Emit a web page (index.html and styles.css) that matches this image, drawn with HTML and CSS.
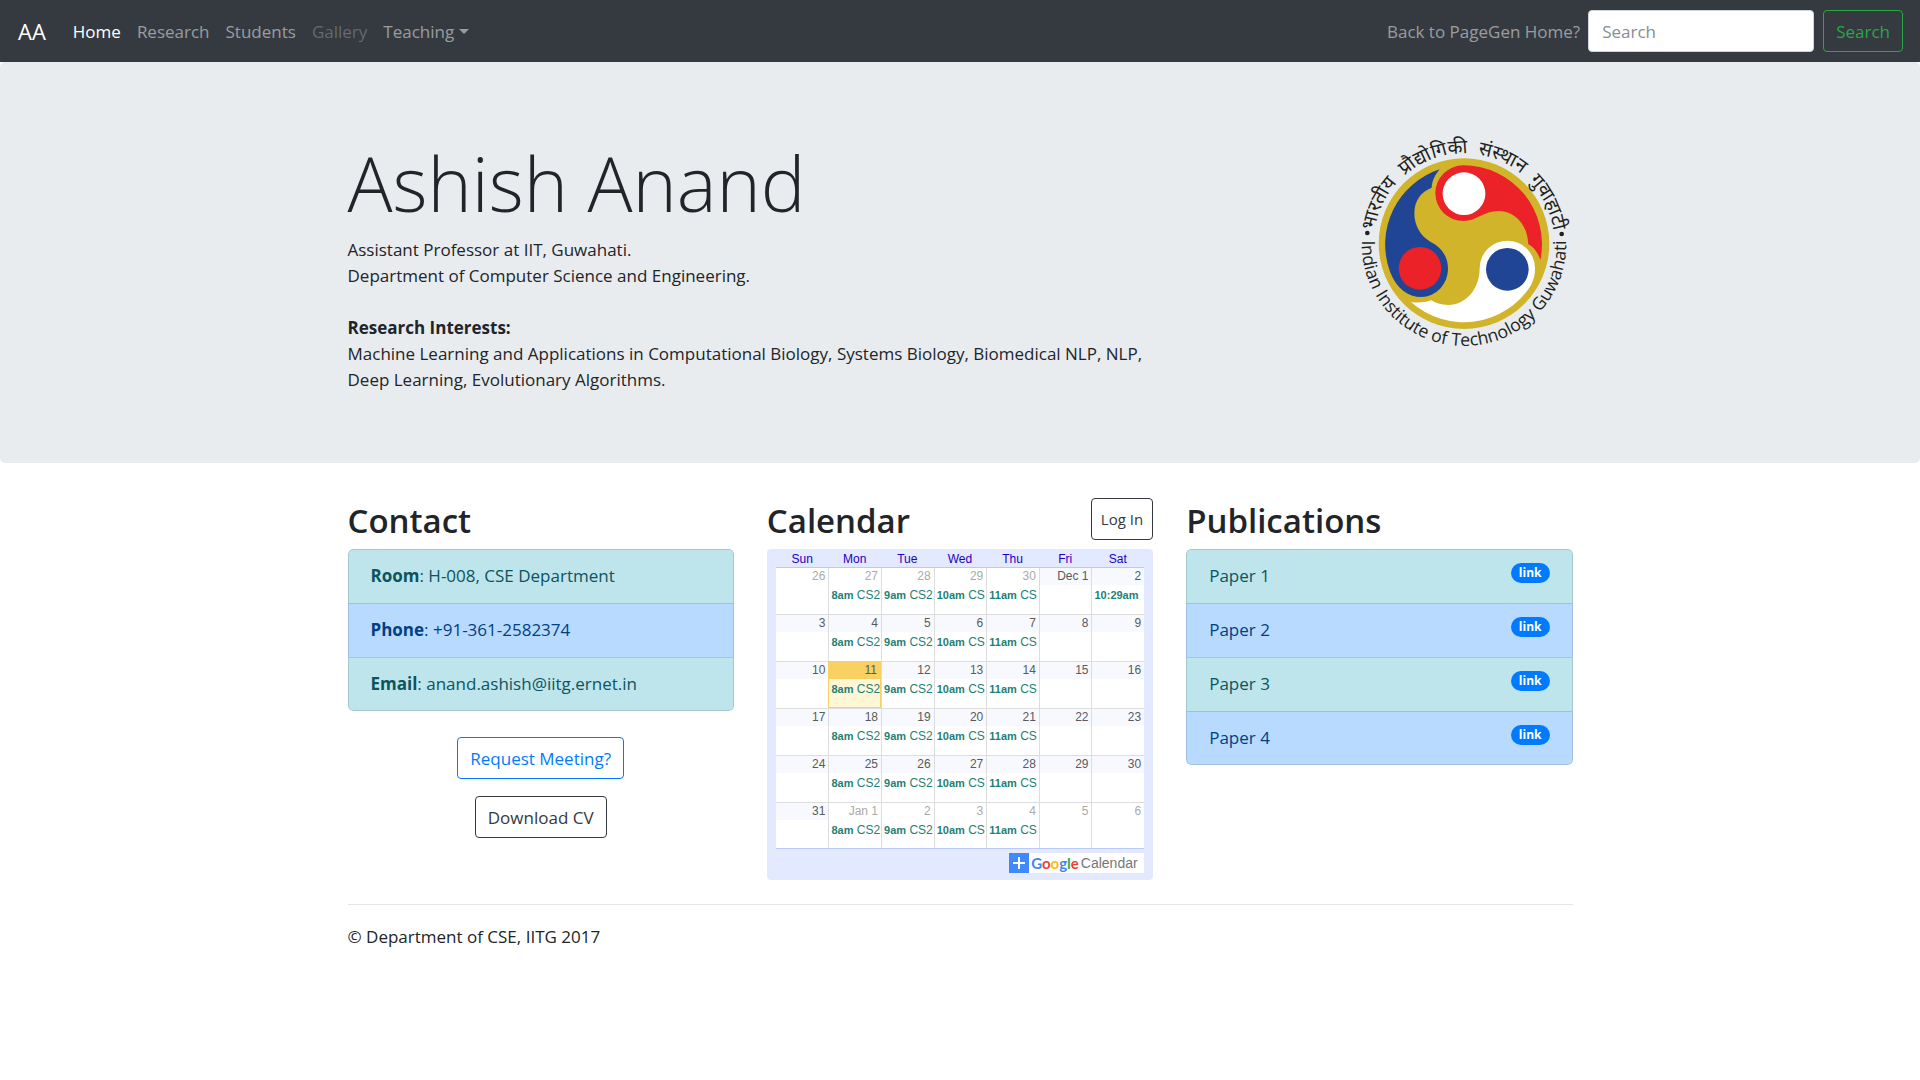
FILE: index.html
```html
<!DOCTYPE html>
<html lang="en">
<head>
<meta charset="utf-8">
<meta name="viewport" content="width=device-width, initial-scale=1">
<title>Ashish Anand</title>
<link rel="stylesheet" href="styles.css">
</head>
<body>
<header class="navbar">
  <a class="brand" href="#">AA</a>
  <nav class="nav-links">
    <a class="nav-link active" href="#">Home</a>
    <a class="nav-link" href="#">Research</a>
    <a class="nav-link" href="#">Students</a>
    <a class="nav-link disabled" href="#">Gallery</a>
    <a class="nav-link dropdown" href="#">Teaching</a>
  </nav>
  <form class="search">
    <a class="nav-link" href="#">Back to PageGen Home?</a>
    <input class="search-input" type="search" placeholder="Search" aria-label="Search">
    <button class="btn btn-success" type="submit">Search</button>
  </form>
</header>

<section class="hero">
  <div class="container hero-row">
    <div class="intro">
      <h1>Ashish Anand</h1>
      <p>Assistant Professor at IIT, Guwahati.<br>Department of Computer Science and Engineering.<br><br><b>Research Interests:</b><br>Machine Learning and Applications in Computational Biology, Systems Biology, Biomedical NLP, NLP, Deep Learning, Evolutionary Algorithms.</p>
    </div>
    <svg class="logo" viewBox="60 36 639 648" role="img" aria-label="Indian Institute of Technology Guwahati">
      <defs>
        <path id="arc-bottom" d="M65 341V371A307 307 0 0 0 679 371V341"/>
        <path id="arc-top" d="M101 391V371A271 271 0 0 1 643 371V391"/>
      </defs>
      <circle cx="372" cy="371" r="256" fill="#d2b42a"/>
      <path fill="#204595" d="M299 148A237 237 0 0 0 150 455C170 506 204 531 244 531A82 84 0 0 0 324 446C324 405 300 380 272 366C240 347 223 315 223 280C223 240 245 215 275 203C276 183 285 165 299 148Z"/>
      <path fill="#eb2227" d="M370 136A236 236 0 0 1 601 420C594 398 582 382 565 373C562 308 520 273 475 273C430 273 410 303 370 303A84 84 0 0 1 286 220A84 84 0 0 1 370 136Z"/>
      <path fill="#fff" d="M213 546A238 238 0 0 0 573 496C582 478 585 462 585 445A83 83 0 0 0 502 362A83 83 0 0 0 419 445C419 510 375 555 325 555C302 555 286 548 273 541C253 548 233 549 213 546Z"/>
      <circle cx="372" cy="221" r="64" fill="#fff"/>
      <circle cx="240" cy="445" r="64" fill="#eb2227"/>
      <circle cx="502" cy="448" r="64" fill="#204595"/>
      <circle cx="82" cy="339" r="7" fill="#231f20"/>
      <circle cx="665" cy="342" r="7" fill="#231f20"/>
      <text class="logo-text"><textPath href="#arc-bottom" startOffset="50%">Indian Institute of Technology Guwahati</textPath></text>
      <text class="logo-text logo-hindi" lang="hi"><textPath href="#arc-top" startOffset="50%">भारतीय&nbsp; प्रौद्योगिकी&nbsp; संस्थान&nbsp; गुवाहाटी</textPath></text>
    </svg>
  </div>
</section>

<main class="container">
  <div class="columns">
    <section>
      <h2>Contact</h2>
      <ul class="list">
        <li class="info"><span><b>Room</b>: H-008, CSE Department</span></li>
        <li class="primary"><span><b>Phone</b>: +91-361-2582374</span></li>
        <li class="info"><span><b>Email</b>: anand.ashish@iitg.ernet.in</span></li>
      </ul>
      <div class="actions">
        <button class="btn btn-primary" type="button">Request Meeting?</button>
        <button class="btn btn-dark" type="button">Download CV</button>
      </div>
    </section>

    <section>
      <div class="heading-row">
        <h2>Calendar</h2>
        <button class="btn btn-dark btn-small" type="button">Log In</button>
      </div>
      <div class="calendar">
        <table>
          <thead><tr><th>Sun</th><th>Mon</th><th>Tue</th><th>Wed</th><th>Thu</th><th>Fri</th><th>Sat</th></tr></thead>
          <tbody>
            <tr>
              <td class="other"><div class="date">26</div></td>
              <td class="other"><div class="date">27</div><div class="event"><b>8am</b> CS2</div></td>
              <td class="other"><div class="date">28</div><div class="event"><b>9am</b> CS2</div></td>
              <td class="other"><div class="date">29</div><div class="event"><b>10am</b> CS</div></td>
              <td class="other"><div class="date">30</div><div class="event"><b>11am</b> CS</div></td>
              <td><div class="date">Dec 1</div></td>
              <td><div class="date">2</div><div class="event"><b>10:29am</b></div></td>
            </tr>
            <tr>
              <td><div class="date">3</div></td>
              <td><div class="date">4</div><div class="event"><b>8am</b> CS2</div></td>
              <td><div class="date">5</div><div class="event"><b>9am</b> CS2</div></td>
              <td><div class="date">6</div><div class="event"><b>10am</b> CS</div></td>
              <td><div class="date">7</div><div class="event"><b>11am</b> CS</div></td>
              <td><div class="date">8</div></td>
              <td><div class="date">9</div></td>
            </tr>
            <tr>
              <td><div class="date">10</div></td>
              <td class="today"><div class="date">11</div><div class="event"><b>8am</b> CS2</div></td>
              <td><div class="date">12</div><div class="event"><b>9am</b> CS2</div></td>
              <td><div class="date">13</div><div class="event"><b>10am</b> CS</div></td>
              <td><div class="date">14</div><div class="event"><b>11am</b> CS</div></td>
              <td><div class="date">15</div></td>
              <td><div class="date">16</div></td>
            </tr>
            <tr>
              <td><div class="date">17</div></td>
              <td><div class="date">18</div><div class="event"><b>8am</b> CS2</div></td>
              <td><div class="date">19</div><div class="event"><b>9am</b> CS2</div></td>
              <td><div class="date">20</div><div class="event"><b>10am</b> CS</div></td>
              <td><div class="date">21</div><div class="event"><b>11am</b> CS</div></td>
              <td><div class="date">22</div></td>
              <td><div class="date">23</div></td>
            </tr>
            <tr>
              <td><div class="date">24</div></td>
              <td><div class="date">25</div><div class="event"><b>8am</b> CS2</div></td>
              <td><div class="date">26</div><div class="event"><b>9am</b> CS2</div></td>
              <td><div class="date">27</div><div class="event"><b>10am</b> CS</div></td>
              <td><div class="date">28</div><div class="event"><b>11am</b> CS</div></td>
              <td><div class="date">29</div></td>
              <td><div class="date">30</div></td>
            </tr>
            <tr>
              <td><div class="date">31</div></td>
              <td class="other"><div class="date">Jan 1</div><div class="event"><b>8am</b> CS2</div></td>
              <td class="other"><div class="date">2</div><div class="event"><b>9am</b> CS2</div></td>
              <td class="other"><div class="date">3</div><div class="event"><b>10am</b> CS</div></td>
              <td class="other"><div class="date">4</div><div class="event"><b>11am</b> CS</div></td>
              <td class="other"><div class="date">5</div></td>
              <td class="other"><div class="date">6</div></td>
            </tr>
          </tbody>
        </table>
        <a class="gcal" href="#">
          <svg class="plus" viewBox="0 0 20 20" aria-hidden="true"><path fill="#3f89fb" d="M0 0h20v20H0z"/><path fill="#fff" d="M9 4h2v5h5v2h-5v5H9v-5H4V9h5z"/></svg>
          <span class="google"><span class="blue">G</span><span class="red">o</span><span class="yellow">o</span><span class="blue">g</span><span class="green">l</span><span class="red">e</span></span>
          <span class="gcal-name">Calendar</span>
        </a>
      </div>
    </section>

    <section>
      <h2>Publications</h2>
      <ul class="list">
        <li class="info">Paper 1 <a class="badge" href="#">link</a></li>
        <li class="primary">Paper 2 <a class="badge" href="#">link</a></li>
        <li class="info">Paper 3 <a class="badge" href="#">link</a></li>
        <li class="primary">Paper 4 <a class="badge" href="#">link</a></li>
      </ul>
    </section>
  </div>
  <hr>
  <footer>© Department of CSE, IITG 2017</footer>
</main>
</body>
</html>
```
FILE: styles.css
```css
* { box-sizing: border-box; }
body {
  margin: 0;
  background: #fff;
  color: #212529;
  font-family: "Open Sans", "Noto Sans", sans-serif;
  font-size: 17px;
  line-height: 26px;
}
a { text-decoration: none; }
h1, h2, p, ul { margin: 0; padding: 0; }
button, input { font: inherit; }

.navbar {
  display: flex;
  align-items: center;
  height: 62px;
  padding: 0 17px 0 18px;
  background: #343a40;
}
.brand { margin-right: 19px; color: #fff; font-size: 22px; }
.nav-links { display: flex; }
.nav-link { padding: 1px 8px 0; color: rgba(255, 255, 255, .5); }
.nav-link.active { color: #fff; }
.nav-link.disabled { color: rgba(255, 255, 255, .25); }
.dropdown { display: flex; align-items: center; gap: 5px; }
.dropdown::after {
  content: "";
  border: 5px solid transparent;
  border-top-color: currentColor;
  border-bottom: 0;
}
.search { display: flex; align-items: center; margin-left: auto; }
.search-input {
  width: 226px;
  height: 42px;
  margin-right: 9px;
  padding: 0 13px;
  border: 1px solid #ced4da;
  border-radius: 4px;
  background: #fff;
}
.search-input::placeholder { color: #868e96; opacity: 1; }

.btn {
  height: 42px;
  padding: 1px 12px 0;
  border: 1px solid currentColor;
  border-radius: 4px;
  background: transparent;
}
.btn-success { color: #28a745; }
.btn-primary { color: #007bff; }
.btn-dark { color: #343a40; }
.btn-small { padding: 0 9px; font-size: 15px; }

.container { width: 100%; max-width: 1257px; margin: 0 auto; padding: 0 16px; }
.hero { margin-bottom: 35px; padding: 70px 0; border-radius: 5px; background: #e9ecef; }
.hero-row { display: flex; justify-content: space-between; align-items: flex-start; }
.intro { flex: 0 1 806px; padding-top: 1px; }
h1 { margin-bottom: 4px; font-size: 75px; font-weight: 300; line-height: 100px; }
h2 { padding-top: 2px; margin-bottom: 7px; font-size: 33px; font-weight: 600; line-height: 42px; }
.logo { flex: none; width: 213px; height: 216px; overflow: visible; }
.logo-text { fill: #231f20; font-size: 53px; text-anchor: middle; }
.logo-hindi { font-size: 58px; }

.columns { display: grid; grid-template-columns: repeat(3, minmax(0, 1fr)); gap: 33px; }
.list { list-style: none; border-radius: 5px; overflow: hidden; }
.list li {
  display: flex;
  justify-content: space-between;
  align-items: flex-start;
  padding: 13px 22px 14px;
  border: 1px solid rgba(0, 0, 0, .125);
  border-bottom: 0;
}
.list li:first-child { border-radius: 5px 5px 0 0; }
.list li:last-child { padding-bottom: 13px; border-bottom: 1px solid rgba(0, 0, 0, .125); border-radius: 0 0 5px 5px; }
.info { background: #bee5eb; color: #0c5460; }
.primary { background: #b8daff; color: #004085; }
.badge {
  padding: 0 8px;
  border-radius: 10px;
  background: #007bff;
  color: #fff;
  font-size: 12px;
  font-weight: 700;
  line-height: 20px;
}
.actions { display: flex; flex-direction: column; align-items: center; gap: 17px; margin-top: 26px; }
.heading-row { display: flex; justify-content: space-between; align-items: flex-start; }

.calendar {
  padding: 0 9px 7px;
  border-radius: 4px;
  background: #e3e9ff;
  font-family: "Liberation Sans", Arial, sans-serif;
  font-size: 12px;
}
.calendar table { width: 100%; border-collapse: separate; border-spacing: 0; table-layout: fixed; border-bottom: 1px solid #b9c9fd; }
.calendar th {
  height: 19px;
  padding: 3px 0 0;
  border-bottom: 1px solid #b9c9fd;
  color: #2200c1;
  font-weight: 400;
  line-height: 15px;
}
.calendar td { height: 47px; padding: 0; background: #fff; vertical-align: top; overflow: hidden; }
.calendar td + td { border-left: 1px solid #ddd; }
.calendar tr + tr td { border-top: 1px solid #ddd; }
.calendar tbody tr:first-child td, .calendar tr:last-child td { height: 46px; }
.date { height: 17px; padding-right: 3px; background: #f7f9ff; color: #5a5a5a; line-height: 17px; text-align: right; }
.other .date { background: #fff; color: #aaa; }
.event { padding: 2px 0 0 2px; color: #1f7f75; line-height: 16px; white-space: nowrap; }
.event b { font-size: 11px; }
.calendar tr + tr .today { border: 1px solid #f9d163; background: #fff6d6; }
.today .date { background: #f9d163; }
.gcal {
  display: flex;
  align-items: center;
  gap: 2px;
  width: 135px;
  height: 20px;
  margin: 4px 0 0 auto;
  background: #fff;
  font-size: 14px;
}
.plus { width: 20px; height: 20px; }
.google { font-family: Lato, sans-serif; font-size: 15px; font-weight: 700; }
.gcal-name { color: #777; }
.blue { color: #4285f4; }
.red { color: #ea4335; }
.yellow { color: #fbbc05; }
.green { color: #34a853; }

hr { margin: 24px 0 19px; border: 0; border-top: 1px solid rgba(0, 0, 0, .1); }
```
